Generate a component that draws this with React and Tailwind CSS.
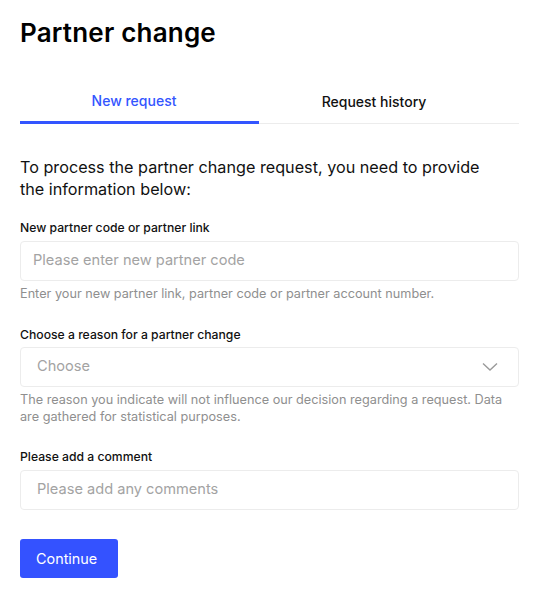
import React from "react";

const font = { fontFamily: "Inter, 'Liberation Sans', sans-serif" };

function Field({ label, placeholder, help, select, padX = "px-[12px]", gap = "mt-[5px]" }) {
  return (
    <div className="flex flex-col">
      <label className="text-[12.2px] leading-[16px] font-medium text-[#111]">{label}</label>
      <div
        className={`${gap} h-[40px] border border-[#ececec] rounded-[4px] flex items-center ${padX}`}
      >
        <span className="text-[14.6px] text-[#a3a3a3] flex-1">{placeholder}</span>
        {select && (
          <svg width="16" height="10" viewBox="0 0 16 10" className="mr-[6px]">
            <path d="M1 1.5 L8 8 L15 1.5" fill="none" stroke="#9a9a9a" strokeWidth="1.4" />
          </svg>
        )}
      </div>
      {help && (
        <p className="mt-[4px] text-[12.7px] leading-[17px] text-[#8f8f8f]">{help}</p>
      )}
    </div>
  );
}

export default function App() {
  return (
    <div className="bg-white w-[545px] min-h-[606px] px-[20px] pt-[16px]" style={font}>
      <h1 className="text-[26px] leading-[34px] font-semibold text-black tracking-[0.2px]">
        Partner change
      </h1>

      <div className="mt-[40px] mr-[6px] flex border-b border-[#ececec]">
        <button className="w-[239px] pb-[10px] pr-[11px] border-b-[3px] border-[#3355ff] -mb-px text-[14px] font-medium text-[#3355ff]">
          New request
        </button>
        <button className="flex-1 pb-[10px] pr-[30px] text-[14px] font-medium text-[#111]">
          Request history
        </button>
      </div>

      <p className="mt-[32px] w-[480px] text-[16.2px] leading-[22px] text-[#111]">
        To process the partner change request, you need to provide the information below:
      </p>

      <div className="mt-[20px] mr-[6px] flex flex-col">
        <Field
          label="New partner code or partner link"
          placeholder="Please enter new partner code"
          help="Enter your new partner link, partner code or partner account number."
        />
        <div className="mt-[25px]">
          <Field
            label="Choose a reason for a partner change"
            placeholder="Choose"
            select
            gap="mt-[4px]"
            padX="pl-[16px] pr-[14px]"
            help="The reason you indicate will not influence our decision regarding a request. Data are gathered for statistical purposes."
          />
        </div>
        <div className="mt-[24px]">
          <Field
            label="Please add a comment"
            placeholder="Please add any comments"
            padX="px-[16px]"
          />
        </div>
      </div>

      <button className="mt-[29px] h-[39px] w-[98px] pl-[16px] text-left rounded-[3px] bg-[#3452ff] text-white text-[14.4px]">
        Continue
      </button>
    </div>
  );
}
